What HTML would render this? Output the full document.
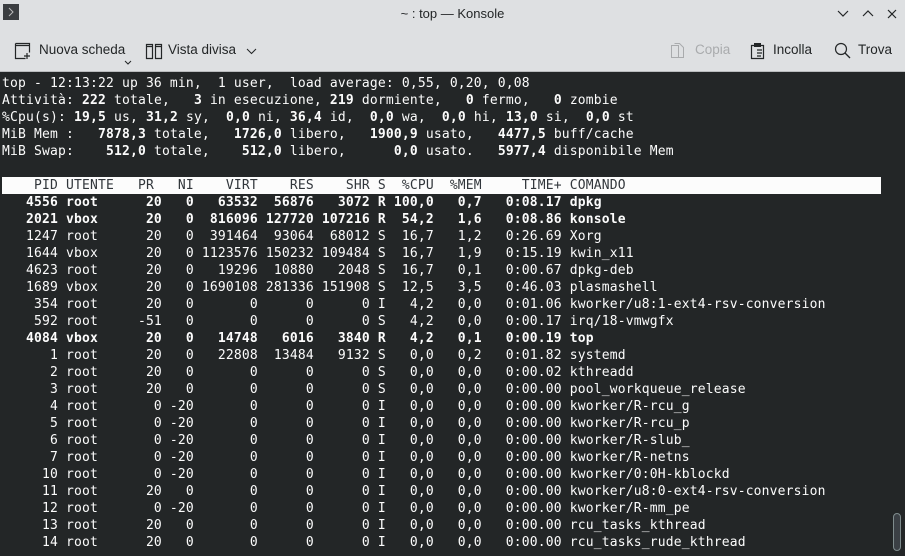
<!DOCTYPE html>
<html><head><meta charset="utf-8"><style>
*{margin:0;padding:0;box-sizing:border-box}
body{width:905px;height:556px;overflow:hidden;background:#232627;font-family:"Liberation Sans","DejaVu Sans",sans-serif;position:relative}
#top{position:absolute;left:0;top:0;width:905px;height:72px;background:#dee0e2;border-bottom:1px solid #b9bbbd}
#title{position:absolute;top:6px;left:0;width:905px;text-align:center;font-size:13px;color:#232627}
.tb{position:absolute;top:42px;font-size:13.5px;color:#232627;white-space:nowrap}
#term{position:absolute;left:2px;top:74px;font-family:"DejaVu Sans Mono","Liberation Mono",monospace;font-size:13px;letter-spacing:0.17px;line-height:17px;color:#fcfcfc;white-space:pre}
b{font-weight:bold}
.hd{background:#fcfcfc;color:#31363b;display:inline-block;width:879px}
#sb{position:absolute;left:893px;top:513px;width:8px;height:38px;border:1px solid #7f8c8d;border-radius:4px;background:#3b4045}
</style></head><body>
<div id="top">
<div style="position:absolute;left:3px;top:4px;width:16px;height:16px;background:#3b3e41"><svg width="16" height="16"><path d="M6 4l4 4-4 4" stroke="#bbb" fill="none"/></svg></div>
<div id="title">~ : top — Konsole</div>
<svg style="position:absolute;left:836px;top:8px" width="64" height="12"><path d="M2 3l5 5 5-5M27 8l5-5 5 5M52 2l8 8M60 2l-8 8" stroke="#232627" stroke-width="1.2" fill="none"/></svg>
<svg style="position:absolute;left:14px;top:42px" width="18" height="18"><path d="M1.5 1.5h14v9M1.5 1.5v15h10M1.5 3.5h14M10 14h6M13 11v6" stroke="#232627" stroke-width="1.2" fill="none"/></svg>
<div class="tb" style="left:39px">Nuova scheda</div>
<svg style="position:absolute;left:124px;top:60px" width="8" height="5"><path d="M1 1l3 3 3-3" stroke="#232627" fill="none"/></svg>
<svg style="position:absolute;left:145px;top:43px" width="18" height="17"><path d="M1.5 1.5h6v14h-6zM10.5 1.5h6v14h-6zM1.5 3.5h6M10.5 3.5h6" stroke="#232627" stroke-width="1.2" fill="none"/></svg>
<div class="tb" style="left:168px">Vista divisa</div>
<svg style="position:absolute;left:246px;top:48px" width="11" height="7"><path d="M1 1l4.5 4.5 4.5-4.5" stroke="#232627" fill="none"/></svg>
<svg style="position:absolute;left:670px;top:42px" width="16" height="18"><path d="M1.5 3.5h7v12h-7zM4.5 1.5h5l4 4v10h-5" stroke="#a9abad" fill="none"/></svg>
<div class="tb" style="left:695px;color:#a9abad">Copia</div>
<svg style="position:absolute;left:750px;top:42px" width="16" height="18"><path d="M1.5 3.5h12v13h-12zM7 8h5M7 11h5M7 14h4" stroke="#232627" stroke-width="1.2" fill="none"/><rect x="4" y="1" width="7" height="4" fill="#232627"/></svg>
<div class="tb" style="left:773px">Incolla</div>
<svg style="position:absolute;left:834px;top:42px" width="18" height="18"><circle cx="7" cy="7" r="5.5" stroke="#232627" stroke-width="1.2" fill="none"/><path d="M11 11l5 5" stroke="#232627" stroke-width="1.3"/></svg>
<div class="tb" style="left:858px">Trova</div>
</div>
<div id="term" style="top:75px">top - 12:13:22 up 36 min,  1 user,  load average: 0,55, 0,20, 0,08
Attività: <b>222 </b>totale,<b>   3 </b>in esecuzione,<b> 219 </b>dormiente,<b>   0 </b>fermo,<b>   0 </b>zombie
%Cpu(s): <b>19,5 </b>us,<b> 31,2 </b>sy,<b>  0,0 </b>ni,<b> 36,4 </b>id,<b>  0,0 </b>wa,<b>  0,0 </b>hi,<b> 13,0 </b>si,<b>  0,0 </b>st
MiB Mem : <b>  7878,3 </b>totale,<b>   1726,0 </b>libero,<b>   1900,9 </b>usato,<b>   4477,5 </b>buff/cache
MiB Swap: <b>   512,0 </b>totale,<b>    512,0 </b>libero,<b>      0,0 </b>usato.<b>   5977,4 </b>disponibile Mem

<span class="hd">    PID UTENTE   PR   NI    VIRT    RES    SHR S  %CPU  %MEM     TIME+ COMANDO</span>
<b>   4556 root      20   0   63532  56876   3072 R 100,0   0,7   0:08.17 dpkg</b>
<b>   2021 vbox      20   0  816096 127720 107216 R  54,2   1,6   0:08.86 konsole</b>
   1247 root      20   0  391464  93064  68012 S  16,7   1,2   0:26.69 Xorg
   1644 vbox      20   0 1123576 150232 109484 S  16,7   1,9   0:15.19 kwin_x11
   4623 root      20   0   19296  10880   2048 S  16,7   0,1   0:00.67 dpkg-deb
   1689 vbox      20   0 1690108 281336 151908 S  12,5   3,5   0:46.03 plasmashell
    354 root      20   0       0      0      0 I   4,2   0,0   0:01.06 kworker/u8:1-ext4-rsv-conversion
    592 root     -51   0       0      0      0 S   4,2   0,0   0:00.17 irq/18-vmwgfx
<b>   4084 vbox      20   0   14748   6016   3840 R   4,2   0,1   0:00.19 top</b>
      1 root      20   0   22808  13484   9132 S   0,0   0,2   0:01.82 systemd
      2 root      20   0       0      0      0 S   0,0   0,0   0:00.02 kthreadd
      3 root      20   0       0      0      0 S   0,0   0,0   0:00.00 pool_workqueue_release
      4 root       0 -20       0      0      0 I   0,0   0,0   0:00.00 kworker/R-rcu_g
      5 root       0 -20       0      0      0 I   0,0   0,0   0:00.00 kworker/R-rcu_p
      6 root       0 -20       0      0      0 I   0,0   0,0   0:00.00 kworker/R-slub_
      7 root       0 -20       0      0      0 I   0,0   0,0   0:00.00 kworker/R-netns
     10 root       0 -20       0      0      0 I   0,0   0,0   0:00.00 kworker/0:0H-kblockd
     11 root      20   0       0      0      0 I   0,0   0,0   0:00.00 kworker/u8:0-ext4-rsv-conversion
     12 root       0 -20       0      0      0 I   0,0   0,0   0:00.00 kworker/R-mm_pe
     13 root      20   0       0      0      0 I   0,0   0,0   0:00.00 rcu_tasks_kthread
     14 root      20   0       0      0      0 I   0,0   0,0   0:00.00 rcu_tasks_rude_kthread</div>
<div id="sb"></div>
</body></html>
